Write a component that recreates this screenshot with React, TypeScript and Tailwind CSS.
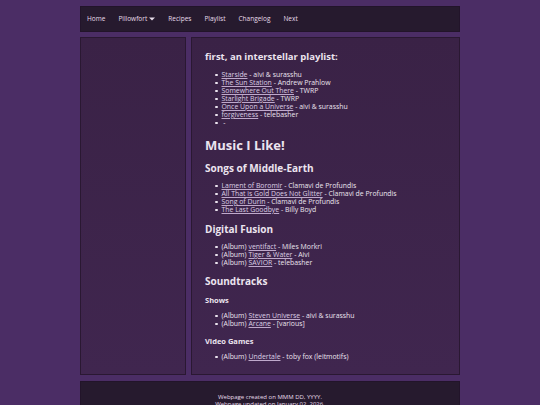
import React from 'react';

type Entry = { prefix?: string; title: string; by?: string };

const playlist: Entry[] = [
  { title: 'Starside', by: 'aivi & surasshu' },
  { title: 'The Sun Station', by: 'Andrew Prahlow' },
  { title: 'Somewhere Out There', by: 'TWRP' },
  { title: 'Starlight Brigade', by: 'TWRP' },
  { title: 'Once Upon a Universe', by: 'aivi & surasshu' },
  { title: 'forgiveness', by: 'telebasher' },
  { title: '' },
];

const middleEarth: Entry[] = [
  { title: 'Lament of Boromir', by: 'Clamavi de Profundis' },
  { title: 'All That is Gold Does Not Glitter', by: 'Clamavi de Profundis' },
  { title: 'Song of Durin', by: 'Clamavi de Profundis' },
  { title: 'The Last Goodbye', by: 'Billy Boyd' },
];

const digital: Entry[] = [
  { prefix: '(Album)', title: 'ventifact', by: 'Miles Morkri' },
  { prefix: '(Album)', title: 'Tiger & Water', by: 'Aivi' },
  { prefix: '(Album)', title: 'SAVIOR', by: 'telebasher' },
];

const shows: Entry[] = [
  { prefix: '(Album)', title: 'Steven Universe', by: 'aivi & surasshu' },
  { prefix: '(Album)', title: 'Arcane', by: '[various]' },
];

const games: Entry[] = [{ prefix: '(Album)', title: 'Undertale', by: 'toby fox (leitmotifs)' }];

const navItems = ['Home', 'Pillowfort', 'Recipes', 'Playlist', 'Changelog', 'Next'];

function SongList({ items, className }: { items: Entry[]; className?: string }) {
  return (
    <ul className={className}>
      {items.map((e, i) => (
        <li key={i} className="flex items-center h-[8px] text-[6.9px] leading-[8px] text-[#ece4ef]">
          <span className="ml-[10px] mr-[4px] w-[2.5px] h-[2.5px] rounded-full bg-[#ece4ef]" />
          {e.prefix && <span className="mr-[2px]">{e.prefix}</span>}
          <span className="underline text-[#dccfe4] decoration-[#bfa9cc]">{e.title}</span>
          <span className="whitespace-pre"> - {e.by ?? ''}</span>
        </li>
      ))}
    </ul>
  );
}

export default function App() {
  return (
    <div
      className="min-h-[405px] bg-[#4b2d65] pt-[6px] overflow-hidden"
      style={{ fontFamily: '"Open Sans", "DejaVu Sans", sans-serif' }}
    >
      <div className="w-[380px] mx-auto">
        {/* top navigation */}
        <nav className="h-[26px] flex items-center gap-[13px] pl-[6px] bg-[#261a2e] border border-[#22142a] text-[6.5px] text-[#e6dcea]">
          {navItems.map((n) => (
            <span key={n} className="flex items-center gap-[2px]">
              {n}
              {n === 'Pillowfort' && (
                <svg width="6" height="4" viewBox="0 0 6 4">
                  <path d="M0 0.5h6L3 3.5z" fill="#e6dcea" />
                </svg>
              )}
            </span>
          ))}
        </nav>

        <div className="mt-[5px] flex gap-[5px] h-[338px]">
          <aside className="w-[106px] bg-gradient-to-b from-[#3a2246] to-[#40264f] border border-[#2a1832]" />

          <main className="flex-1 bg-gradient-to-b from-[#3a2246] to-[#40264f] border border-[#2a1832] pl-[13px] pt-[13px] text-[#ece4ef]">
            <h2 className="text-[9.5px] leading-[12px] font-bold">first, an interstellar playlist:</h2>
            <SongList items={playlist} className="mt-[8px]" />

            <h1 className="mt-[10px] text-[13px] leading-[16px] font-bold">Music I Like!</h1>

            <h3 className="mt-[9px] text-[10px] leading-[12px] font-bold">Songs of Middle-Earth</h3>
            <SongList items={middleEarth} className="mt-[8px]" />

            <h3 className="mt-[9px] text-[10px] leading-[12px] font-bold">Digital Fusion</h3>
            <SongList items={digital} className="mt-[8px]" />

            <h3 className="mt-[8px] text-[10px] leading-[12px] font-bold">Soundtracks</h3>
            <h4 className="mt-[8px] text-[7.5px] leading-[10px] font-bold">Shows</h4>
            <SongList items={shows} className="mt-[7px]" />
            <h4 className="mt-[8px] text-[7.5px] leading-[10px] font-bold">Video Games</h4>
            <SongList items={games} className="mt-[7px]" />
          </main>
        </div>

        <footer className="mt-[6px] h-[40px] bg-[#261a2e] border border-[#22142a] pt-[12px] text-center text-[6px] leading-[7px] text-[#e6dcea]">
          <p>Webpage created on MMM DD, YYYY.</p>
          <p>Webpage updated on January 02, 2026.</p>
        </footer>
      </div>
    </div>
  );
}
